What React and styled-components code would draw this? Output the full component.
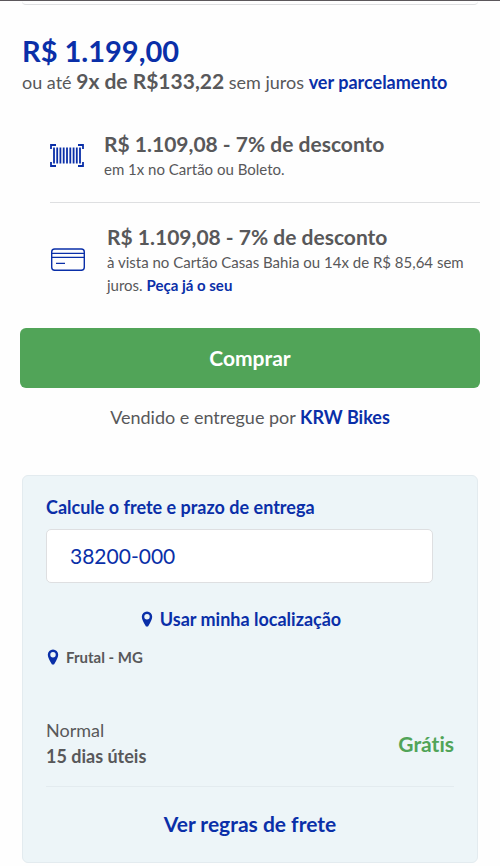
/**
 * Product purchase panel: price, payment options, buy button and
 * the shipping calculator with the result for the typed postal code.
 */

import { useState } from 'react'
import styled, { createGlobalStyle } from 'styled-components'

const colors = {
	blue: '#0a2fa8',
	text: '#58585a',
	green: '#51a458',
	panel: '#edf5f8',
	line: '#dedfe1',
	softLine: '#e3ebef',
}

export default function App() {
	const [zipCode, setZipCode] = useState('38200-000')

	return (
		<>
			<GlobalStyle />

			<Page>
				<PreviousBox />

				{/* Price */}
				<PriceSection>
					<Price>R$ 1.199,00</Price>

					<Installments>
						ou até <strong>9x de R$133,22</strong> sem juros{' '}
						<Link href='#parcelamento'>ver parcelamento</Link>
					</Installments>
				</PriceSection>

				{/* Payment options */}
				<Options>
					<Option>
						<BarcodeIcon />
						<div>
							<OptionTitle>R$ 1.109,08 - 7% de desconto</OptionTitle>
							<OptionText>em 1x no Cartão ou Boleto.</OptionText>
						</div>
					</Option>

					<Option $divided>
						<CardIcon />
						<div>
							<OptionTitle>R$ 1.109,08 - 7% de desconto</OptionTitle>
							<OptionText>
								à vista no Cartão Casas Bahia ou 14x de R$ 85,64 sem
								juros. <Link href='#cartao'>Peça já o seu</Link>
							</OptionText>
						</div>
					</Option>
				</Options>

				<BuyButton type='button'>Comprar</BuyButton>

				<Seller>
					Vendido e entregue por <Link href='#loja'>KRW Bikes</Link>
				</Seller>

				{/* Shipping */}
				<Shipping>
					<ShippingLabel htmlFor='cep'>
						Calcule o frete e prazo de entrega
					</ShippingLabel>

					<ZipInput
						id='cep'
						type='text'
						inputMode='numeric'
						value={zipCode}
						onChange={(e) => setZipCode(e.target.value)}
					/>

					<LocationButton type='button'>
						<PinIcon />
						Usar minha localização
					</LocationButton>

					<City>
						<PinIcon />
						Frutal - MG
					</City>

					<Delivery>
						<div>
							<DeliveryText>Normal</DeliveryText>
							<DeliveryText $bold>15 dias úteis</DeliveryText>
						</div>
						<Free>Grátis</Free>
					</Delivery>

					<RulesLink href='#regras'>Ver regras de frete</RulesLink>
				</Shipping>
			</Page>
		</>
	)
}

function BarcodeIcon() {
	return (
		<OptionIcon width='34' height='24' viewBox='0 0 34 24' aria-hidden='true'>
			<path
				d='M1 5V1h5M28 1h5v4M33 18v4h-5M6 22H1v-4'
				fill='none'
				stroke={colors.blue}
				strokeWidth='1.8'
			/>
			<path
				d='M4 3.5v16M7.2 3.5v16M10.4 3.5v16M13.7 3.5v16M17 3.5v16M20.3 3.5v16M23.6 3.5v16M26.8 3.5v16M30 3.5v16'
				stroke={colors.blue}
				strokeWidth='1.8'
			/>
		</OptionIcon>
	)
}

function CardIcon() {
	return (
		<OptionIcon width='36' height='24' viewBox='0 0 36 24' aria-hidden='true'>
			<g fill='none' stroke={colors.blue} strokeWidth='1.4'>
				<rect x='1.7' y='1' width='32.6' height='21.3' rx='3' />
				<path d='M2 5.4h32M2 9.4h32M6 15.4h9' />
			</g>
		</OptionIcon>
	)
}

function PinIcon() {
	return (
		<svg width='12' height='16' viewBox='0 0 12 16' aria-hidden='true'>
			<path
				d='M6 .5a5.2 5.2 0 0 1 5.2 5.2c0 2.5-1.8 5.4-3.3 8.3L7 15.5H5L4.1 14C2.6 11.1.8 8.2.8 5.7A5.2 5.2 0 0 1 6 .5zM6 3a2.7 2.7 0 1 0 0 5.4A2.7 2.7 0 0 0 6 3z'
				fill={colors.blue}
				fillRule='evenodd'
			/>
		</svg>
	)
}

// Styled components
const GlobalStyle = createGlobalStyle`
	*, *::before, *::after {
		box-sizing: border-box;
	}

	body {
		margin: 0;
		background: #fefefe;
		color: ${colors.text};
		font-family: Lato, 'Open Sans', sans-serif;
		font-variant-ligatures: none;
	}

	p, h1, h2 {
		margin: 0;
	}

	button, input {
		font-family: inherit;
	}
`

const Page = styled.main`
	display: flex;
	flex-direction: column;
	padding: 0 20px 3px;
	border-top: 1px solid #5b575b;
`

const PreviousBox = styled.div`
	height: 4px;
	margin: 0 2px;
	border-bottom: 1px solid ${colors.line};
	border-radius: 0 0 4px 4px;
`

const Link = styled.a`
	color: ${colors.blue};
	font-weight: 700;
	text-decoration: none;
`

const PriceSection = styled.section`
	padding: 28px 0 0 2px;
`

const Price = styled.h1`
	color: ${colors.blue};
	font-size: 29px;
	font-weight: 700;
	line-height: 36px;
`

const Installments = styled.p`
	font-size: 18px;
	line-height: 24px;

	strong {
		font-size: 21px;
		font-weight: 700;
	}
`

const Options = styled.section`
	padding: 36px 0 31px 30px;
`

const Option = styled.div`
	display: flex;
	align-items: center;
	gap: ${({ $divided }) => ($divided ? '21px' : '20px')};
	padding-bottom: ${({ $divided }) => ($divided ? '0' : '21px')};

	${({ $divided }) =>
		$divided &&
		`
		padding-top: 20px;
		border-top: 1px solid ${colors.line};
	`}
`

const OptionIcon = styled.svg`
	flex-shrink: 0;
`

const OptionTitle = styled.h2`
	font-size: 21px;
	font-weight: 700;
	line-height: 28px;
`

const OptionText = styled.p`
	font-size: 15px;
	line-height: 23px;
`

const BuyButton = styled.button`
	height: 60px;
	padding: 0 0 2px;
	border: 0;
	border-radius: 6px;
	background: ${colors.green};
	color: #fff;
	font-size: 21px;
	font-weight: 700;
	cursor: pointer;
`

const Seller = styled.p`
	margin: 16px 0 45px;
	font-size: 18px;
	line-height: 26px;
	text-align: center;
`

const Shipping = styled.section`
	display: flex;
	flex-direction: column;
	margin: 0 2px;
	padding: 18px 23px 24px;
	border: 1px solid ${colors.softLine};
	border-radius: 6px;
	background: ${colors.panel};
`

const ShippingLabel = styled.label`
	color: ${colors.blue};
	font-size: 18px;
	font-weight: 700;
	line-height: 26px;
`

const ZipInput = styled.input`
	height: 54px;
	margin: 9px 21px 23px 0;
	padding: 0 23px 2px;
	border: 1px solid ${colors.line};
	border-radius: 5px;
	background: #fff;
	color: ${colors.blue};
	font-size: 21px;
`

const LocationButton = styled.button`
	display: flex;
	align-items: center;
	align-self: center;
	gap: 7px;
	margin-right: 18px;
	padding: 0;
	border: 0;
	background: none;
	color: ${colors.blue};
	font-size: 18px;
	font-weight: 700;
	line-height: 26px;
	cursor: pointer;
`

const City = styled.p`
	display: flex;
	align-items: center;
	gap: 7px;
	margin-top: 13px;
	padding-left: 1px;
	font-size: 15px;
	font-weight: 700;
	line-height: 24px;
`

const Delivery = styled.div`
	display: flex;
	align-items: center;
	justify-content: space-between;
	margin-top: 48px;
	padding-bottom: 17px;
	border-bottom: 1px solid ${colors.softLine};
`

const DeliveryText = styled.p`
	font-size: 18px;
	font-weight: ${({ $bold }) => ($bold ? 700 : 400)};
	line-height: 26px;
`

const Free = styled.span`
	color: ${colors.green};
	font-size: 21px;
	font-weight: 700;
`

const RulesLink = styled(Link)`
	align-self: center;
	margin-top: 23px;
	font-size: 21px;
	line-height: 28px;
`
